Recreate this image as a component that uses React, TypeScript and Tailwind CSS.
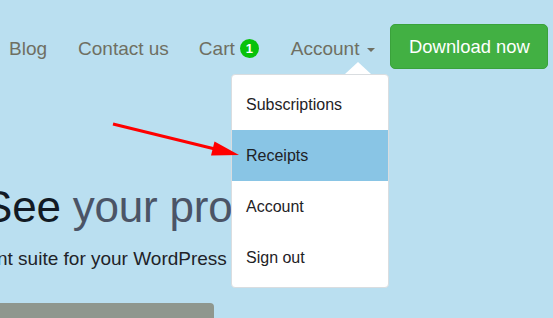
import React from "react";

export default function App() {
  const navText = "text-[19px] leading-[21px] text-[#6f6f62] mt-[14px] whitespace-nowrap";
  return (
    <div className="relative w-[553px] h-[318px] overflow-hidden bg-[#badff0] font-['Liberation_Sans',Arial,sans-serif]">
      <div className="flex flex-col">
        {/* Header */}
        <header className="flex items-start pt-[24px] pl-[9px] h-[69px]">
          <a className={navText}>Blog</a>
          <a className={navText + " ml-[31px]"}>Contact us</a>
          <a className={navText + " ml-[30px] flex items-center"}>
            Cart
            <span className="ml-[5px] w-[19px] h-[19px] rounded-full bg-[#08c20a] text-white text-[13px] font-bold leading-[19px] text-center">
              1
            </span>
          </a>
          <a className={navText + " ml-[32px] flex items-center"}>
            Account
            <span className="ml-[8px] mt-[2px] w-0 h-0 border-l-[4px] border-r-[4px] border-t-[4px] border-l-transparent border-r-transparent border-t-[#6f6f62]" />
          </a>
          <button className="ml-[15px] w-[158px] h-[45px] rounded-[5px] bg-[#42b043] border border-[#3aa23b] text-white text-[18.4px] leading-[21px] whitespace-nowrap">
            Download now
          </button>
        </header>

        {/* Hero */}
        <h1 className="mt-[116px] ml-[-17px] text-[44px] leading-[44px] whitespace-nowrap tracking-[-0.2px]">
          <span className="text-[#121a24]">See </span>
          <span className="text-[#4b5466]">your products</span>
        </h1>
        <p className="mt-[20px] ml-[-3px] text-[19px] leading-[19px] text-[#1f2328] whitespace-nowrap">
          nt suite for your WordPress
        </p>
        <div className="mt-[35px] w-[214px] h-[30px] rounded-tr-[4px] bg-[#8f978e]" />
      </div>

      {/* Dropdown menu */}
      <div className="absolute left-[231px] top-[74px] w-[158px]">
        <div className="absolute left-[114px] top-[-12px] w-0 h-0 border-l-[13px] border-r-[13px] border-b-[12px] border-l-transparent border-r-transparent border-b-white" />
        <div className="h-[214px] bg-white rounded-[4px] border border-[#d9dde0] py-[4px] flex flex-col">
          {["Subscriptions", "Receipts", "Account", "Sign out"].map((item) => (
            <div
              key={item}
              className={
                "h-[51px] shrink-0 flex items-center px-[14px] text-[16px] leading-[18px] text-[#1e2226] " +
                (item === "Receipts" ? "bg-[#89c5e5]" : "")
              }
            >
              {item}
            </div>
          ))}
        </div>
      </div>

      {/* Red annotation arrow */}
      <svg className="absolute left-0 top-0 pointer-events-none" width="553" height="318">
        <line x1="113" y1="124" x2="215" y2="149" stroke="#ff0000" strokeWidth="3" />
        <polygon points="239,155 211,155.5 214.5,141.5" fill="#ff0000" />
      </svg>
    </div>
  );
}
